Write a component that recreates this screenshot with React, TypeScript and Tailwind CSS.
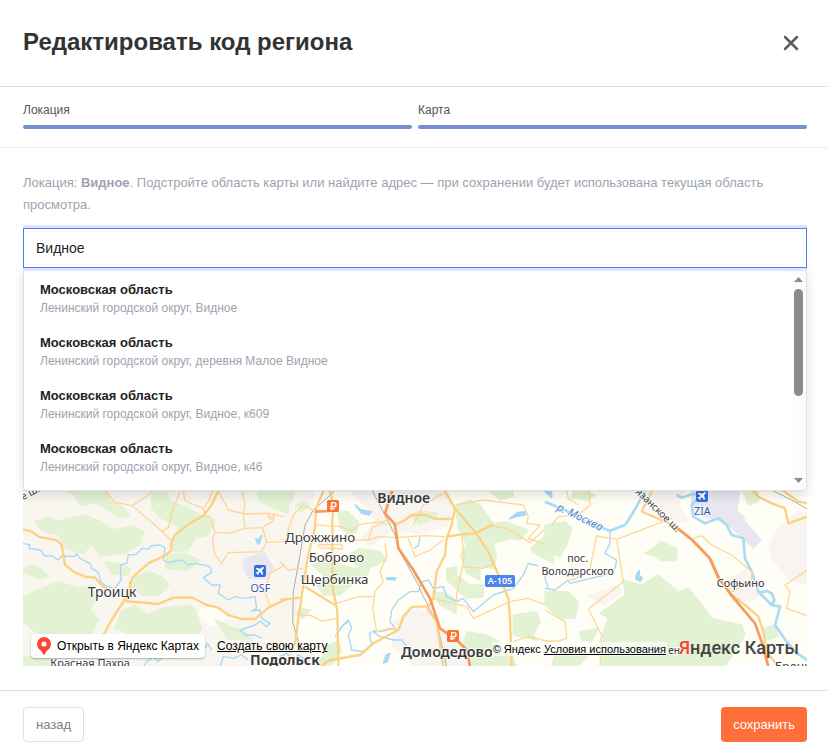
import { useState } from 'react';
import { X } from 'lucide-react';

interface MapTileData {
  x: number;
  land: string[];
  greens: string[];
  airports: string[];
  rivers: string[];
  wideRivers: string[];
  lakes: string[];
  rails: string[];
  minorRoads: string[];
  roads: string[];
  highways: string[];
}

interface MapLabelProps {
  x: number;
  y: number;
  size: number;
  children: string;
  weight?: number;
  color?: string;
  anchor?: 'start' | 'middle';
  transform?: string;
  italic?: boolean;
}

const steps = ['Локация', 'Карта'];

const suggestions = [
  { id: 1, title: 'Московская область', subtitle: 'Ленинский городской округ, Видное' },
  { id: 2, title: 'Московская область', subtitle: 'Ленинский городской округ, деревня Малое Видное' },
  { id: 3, title: 'Московская область', subtitle: 'Ленинский городской округ, Видное, к609' },
  { id: 4, title: 'Московская область', subtitle: 'Ленинский городской округ, Видное, к46' },
];

const tiles: MapTileData[] = [
  {
    x: -24,
    land: ['M550 385L570 368 620 372 630 400 590 425z'],
    greens: [
      'M112 0L262 0 285 50 322 66 346 92 318 98 262 66 240 52 196 62 178 30z',
      'M60 110L100 96 130 108 210 90 255 108 296 135 350 122 385 140 376 178 330 205 255 212 230 178 205 205 150 190 130 150 84 140z',
      'M24 250L60 240 90 262 100 275 80 282 24 262z',
      'M24 335L70 315 130 290 190 310 230 300 240 340 225 375 250 405 215 470 140 520 120 500 60 440 24 410z',
      'M318 380L360 360 395 390 440 370 520 360 540 372 560 430 530 470 480 462 420 460 380 470 330 440 300 430z',
      'M360 278L400 258 440 275 462 300 430 330 380 330 356 305z',
      'M268 232L310 235 345 250 340 270 290 268z',
      'M410 25L440 0 470 50 520 70 560 90 600 105 580 150 540 160 520 195 480 200 470 170 490 125 440 100 410 70z',
      'M724 0L820 0 820 85 760 62 730 45z',
      'M455 210L510 205 555 225 520 255 450 250z',
      'M600 405L650 425 690 440 710 462 640 462z',
      'M24 515L104 515 114 545 24 545z',
    ],
    airports: ['M690 220L748 203 776 250 755 282 700 280 684 245z'],
    rivers: [
      'M24 175L45 180 42 190 75 195 90 213 110 212 130 225 140 213 180 215 183 205 195 220 225 235 230 250 250 262 258 290 275 305 300 310 318 285 316 240 335 235 340 210 365 208 380 190 400 192 410 182 435 180 450 188 445 225 460 233 500 225 520 240 545 235 585 245 590 262 565 278 590 300 615 300 610 325 640 345 660 335 690 340 720 335 725 370 710 378 735 375 740 400 765 415 755 425 735 408 720 420 675 435 690 450 720 450 740 460',
      'M615 545L625 515 655 520 680 510 700 525',
      'M385 545L395 530 415 515 430 530 445 510 470 520',
      'M565 500L578 475 590 495',
    ],
    wideRivers: [],
    lakes: ['M722 160L730 165 741 150 735 172 728 177z'],
    rails: [],
    minorRoads: [
      'M256 0L300 52 352 62 400 30 420 0',
      'M352 62L440 138 468 165',
      'M440 140L460 128 475 70 502 0',
      'M502 0L510 48 565 70 580 50 600 0',
      'M565 70L568 92 585 95 600 140 592 165 600 210 620 235 640 203 740 200 755 170 742 128 690 130 640 145 600 142',
      'M611 20L640 75 690 87 760 85 810 95',
      'M690 130L685 85 690 55 676 0',
      'M745 125L775 108 778 85 770 100 758 85 765 105',
      'M742 128L755 172 810 170',
      'M810 240L765 265 750 320 765 365',
    ],
    roads: [
      'M24 133L50 140 70 155 125 166 140 180 150 240 180 262 210 275 240 278 265 305 285 320',
      'M618 0L590 60 565 92 520 118 480 150 468 175 470 195 450 212 400 235 352 278 340 325 325 350 290 405 265 450',
      'M345 290L348 320 335 345',
      'M328 348L430 357 475 338 530 337 575 360 610 368 640 390 680 402 720 402 760 368 810 345',
    ],
    highways: [],
  },
  {
    x: 771,
    land: [
      'M105 0L810 0 810 545 150 545 60 470 50 380 85 210 105 130z',
    ],
    greens: [
      'M0 0L45 0 35 50 0 62z',
      'M45 60L75 48 90 65 65 78z',
      'M172 80L205 80 235 110 230 140 205 150 180 125z',
      'M395 95L410 80 470 82 470 100 420 118z',
      'M525 60L570 45 600 60 640 115 680 110 745 135 720 165 690 160 640 175 650 215 640 250 600 245 600 285 560 265 540 210 560 180 535 130z',
      'M630 20L640 0 700 0 700 35 660 45z',
      'M205 210L240 190 300 200 320 225 280 245 230 240z',
      'M95 240L140 225 220 250 270 240 265 265 215 300 180 330 130 330 110 300 130 270z',
      'M500 250L530 245 530 270 570 300 610 300 610 335 560 340 500 285z',
      'M455 320L500 325 530 345 528 385 480 360z',
      'M700 390L770 380 780 410 760 450 770 465 700 450z',
      'M560 440L620 450 680 480 710 545 570 545 550 480z',
      'M145 480L175 470 185 500 150 545 110 545z',
      'M60 370L90 375 70 400 45 385z',
      'M755 185L800 150 820 160 820 235 755 200z',
    ],
    airports: [],
    rivers: [
      'M425 290L445 285 460 310 490 305 500 335 530 350 550 340 580 380 640 330 700 310 730 270 745 235 775 243',
      'M425 290L415 320 390 320 355 345 335 375 330 410 345 430 300 440 280 440 300 455 340 465 365 465 385 490 405 500',
      'M180 430L205 405 215 430 205 450 215 495 250 500 275 480 268 445 285 435',
      'M402 190L415 182 420 155',
      'M800 245L795 280 805 310',
      'M0 515L20 505 40 525 55 510 85 530',
      'M205 410L190 420 165 455',
    ],
    wideRivers: [],
    lakes: [
      'M225 60L245 75 275 80 268 90 245 85z',
      'M688 102L712 82 738 80 735 90 710 95z',
      'M775 0L815 22 815 38z',
      'M320 278L348 278 345 285 320 283z',
      'M310 535L318 510 330 505 322 530z',
    ],
    rails: [
      'M170 0L160 22 100 75 75 120 60 210 40 320 38 410 55 470 60 500',
      'M268 0L320 100 345 150 360 200 415 300 430 335 470 410 500 545',
    ],
    minorRoads: [
      'M110 120L180 125 215 138 240 118 300 110 320 120',
      'M110 180L185 178 188 192 115 188',
      'M210 165L265 165 300 155 350 158 430 152 495 155',
      'M265 165L275 130 330 100',
      'M315 175L320 215 300 260 310 290 285 320 278 370 290 440 330 430 355 435',
      'M170 355L235 335 280 335',
      'M60 390L95 392 125 408 170 400',
      'M385 160L405 215 450 195 490 165',
      'M545 150L552 220 530 330 530 350',
      'M530 60L610 45 730 60 745 95 740 115 780 120 745 160 800 180',
      'M548 245L610 250 640 235',
      'M620 120L680 130 750 172 810 120',
      'M460 340L560 365 580 400 690 350 745 340 810 365',
      'M700 470L745 455 810 470',
      'M0 230L25 255 70 250',
      'M400 120L430 60 490 25',
      'M105 80L70 60 40 90 20 150',
    ],
    roads: [
      'M138 0L108 70 105 130 85 210 70 300 55 400 45 480',
      'M484 0L525 70 585 140 625 200 660 280 685 340 690 400 695 545',
      'M350 118L375 105 395 90 440 90 465 102 515 102',
      'M525 70L515 120 500 160 495 210 470 260 460 340 445 365 395 365 370 395 355 435 280 475 240 510 150 525 120 545',
      'M500 155L545 148 585 145 640 118',
      'M0 345L60 338',
      'M75 305L165 360',
      'M440 370L470 410 490 545',
      'M145 0L160 60 157 100 157 300 172 380 175 545',
    ],
    highways: [
      'M342 0L315 85 345 118 355 190 400 255 450 340 480 430 530 465 560 495 570 545',
      'M105 80L150 78',
    ],
  },
  {
    x: 1566,
    land: ['M15 0L820 0 820 545 15 545z'],
    greens: [
      'M0 120L60 110 80 130 65 180 45 215 0 200z',
      'M300 205L350 170 395 190 395 225 350 228 330 215z',
      'M165 385L240 330 235 285 290 300 340 270 400 320 430 310 480 370 500 400 590 420 600 450 540 545 170 545 165 470 190 400z',
      'M0 320L70 320 100 350 90 400 40 400 0 360z',
      'M105 440L160 430 140 470 110 465z',
      'M30 500L90 490 130 510 100 545 20 545z',
      'M585 0L640 0 640 50 610 60z',
      'M570 70L600 100 572 95z',
      'M90 0L150 30 130 45 80 40z',
      'M655 430L690 420 700 455 665 465z',
    ],
    airports: ['M440 0L588 0 575 80 648 165 625 190 540 110 475 95 440 60z'],
    rivers: [
      'M195 137L195 175 180 205 215 225 210 250 180 270 75 295 70 285 30 315 0 310',
    ],
    wideRivers: [
      'M0 50L60 75 120 110 195 137 240 120 260 90 300 20',
      'M395 30L410 38 440 28 470 25 440 60 445 95 480 115 520 100 545 120 560 150 595 160 600 220 620 260 640 320 680 360 705 365 690 420 725 470 750 500 800 535',
      'M640 325L665 318 680 325 688 345 680 360',
    ],
    lakes: ['M274 268L283 256 283 270 292 280 285 290 272 282z'],
    rails: ['M680 15L740 45 810 85'],
    minorRoads: [
      'M215 163L380 100',
      'M215 163L155 153 135 250 95 280 75 285',
      'M215 163L235 290 130 372 170 450 165 545',
      'M445 160L470 152 500 180 560 210 620 260 620 290 560 320',
      'M0 375L60 410 65 460 40 468 0 470',
      'M20 120L40 95 100 90 135 60 130 0',
      'M810 240L720 300 735 320 725 370 810 400',
      'M60 0L70 40 100 60',
    ],
    roads: [
      'M330 0L290 80 385 120 440 165 490 215 520 280 560 330 600 360 640 395 655 440 665 500 700 545',
      'M610 0L640 35 680 55 720 70 730 115 786 95',
      'M690 0L760 50 820 60',
    ],
    highways: ['M388 122L442 165 495 220 522 280 555 325 600 380 630 415 650 470 670 545'],
  },
];

const urbanAreas = [
  'M980 0L1270 0 1290 60 1270 110 1190 130 1110 120 1040 170 1020 140 1060 90z',
  'M1110 400L1170 350 1220 370 1260 430 1330 450 1330 530 1180 530 1110 470z',
  'M2238 165L2266 115 2326 65 2376 75 2376 285 2306 275 2246 205z',
  'M2110 275L2166 240 2216 305 2186 335 2126 330z',
  'M1866 0L1986 0 1966 45 1996 95 1946 95z',
  'M1696 320L1786 285 1796 305 1746 345z',
];

function MapLabel({ x, y, size, children, weight = 400, color = '#3b3b3b', anchor = 'start', transform, italic }: MapLabelProps) {
  return (
    <text
      x={x}
      y={y}
      fontSize={size}
      fontWeight={weight}
      fill={color}
      stroke="#ffffff"
      strokeWidth={6}
      strokeOpacity={0.8}
      strokeLinejoin="round"
      paintOrder="stroke"
      textAnchor={anchor}
      transform={transform}
      fontStyle={italic ? 'italic' : undefined}
    >
      {children}
    </text>
  );
}

function Plane({ x, y }: { x: number; y: number }) {
  return (
    <g transform={`translate(${x} ${y})`}>
      <rect width="36" height="36" rx="6" fill="#2f6fe0" />
      <path
        d="M29 7c-2-2-5 0-7 2l-3 2-11-3-3 3 9 6-4 5-4-1-2 2 5 3 3 5 2-2-1-4 5-4 6 9 3-3-3-11 3-3c2-2 4-4 2-6z"
        fill="#fff"
      />
    </g>
  );
}

function RubleSign({ x, y }: { x: number; y: number }) {
  return (
    <g transform={`translate(${x} ${y})`}>
      <rect width="36" height="36" rx="5" fill="#fb7430" />
      <path d="M14 31V8h7a6 6 0 0 1 0 12H9M9 26h14" fill="none" stroke="#fff" strokeWidth="4" />
    </g>
  );
}

function Lines({ paths, color, width }: { paths: string[]; color: string; width: number }) {
  return (
    <g fill="none" stroke={color} strokeWidth={width} strokeLinejoin="round">
      {paths.map((d) => (
        <path key={d} d={d} />
      ))}
    </g>
  );
}

function Areas({ paths, color }: { paths: string[]; color: string }) {
  return (
    <g fill={color} stroke={color} strokeWidth={4} strokeLinejoin="round">
      {paths.map((d) => (
        <path key={d} d={d} />
      ))}
    </g>
  );
}

function RegionMap() {
  return (
    <svg
      viewBox="0 0 2352 1158"
      preserveAspectRatio="xMidYMax slice"
      className="absolute inset-0 w-full h-full"
      fontFamily="'Noto Sans', sans-serif"
      role="img"
      aria-label="Карта"
    >
      <rect width="2352" height="1158" fill="#f9f6f0" />
      <g transform="translate(0 630)">
        {tiles.map((tile) => (
          <g key={tile.x} transform={`translate(${tile.x} -15)`}>
            <Areas paths={tile.land} color="#fffef6" />
          </g>
        ))}
        <Areas paths={urbanAreas} color="#f8f4ef" />
        {tiles.map((tile) => (
          <g key={tile.x} transform={`translate(${tile.x} -15)`}>
            <Areas paths={tile.greens} color="#e2f2d3" />
            <Areas paths={tile.airports} color="#e8e7f1" />
            <Lines paths={tile.rivers} color="#a8d8f4" width={4} />
            <Lines paths={tile.wideRivers} color="#a8dbf5" width={8} />
            <Areas paths={tile.lakes} color="#a8d8f4" />
            <Lines paths={tile.rails} color="#adadad" width={3} />
            <Lines paths={tile.minorRoads} color="#fdd79a" width={4} />
            <Lines paths={tile.roads} color="#fdd184" width={7} />
            <Lines paths={tile.highways} color="#f79a5c" width={8} />
          </g>
        ))}

        <g transform="translate(-24 -15)">
          <MapLabel x={24} y={46} size={30} transform="rotate(-28 24 46)">е ш.</MapLabel>
          <MapLabel x={218} y={337} size={42}>Троицк</MapLabel>
          <MapLabel x={106} y={545} size={33}>Красная Пахра</MapLabel>
          <Plane x={717} y={240} />
          <MapLabel x={736} y={321} size={32} color="#2d57ae" anchor="middle">OSF</MapLabel>
        </g>

        <g transform="translate(771 -15)">
          <RubleSign x={141} y={45} />
          <MapLabel x={292} y={54} size={42} weight={600}>Видное</MapLabel>
          <MapLabel x={15} y={171} size={40}>Дрожжино</MapLabel>
          <MapLabel x={86} y={231} size={40}>Боброво</MapLabel>
          <MapLabel x={62} y={298} size={40}>Щербинка</MapLabel>
          <MapLabel x={-90} y={540} size={42} weight={700}>Подольск</MapLabel>
          <rect x="615" y="270" width="90" height="36" rx="5" fill="#4c86e8" />
          <text x="660" y="298" fontSize="27" fontWeight="600" fill="#fff" textAnchor="middle">А-105</text>
          <RubleSign x={501} y={435} />
          <MapLabel x={363} y={516} size={43} weight={600}>Домодедово</MapLabel>
        </g>

        <g transform="translate(1566 -15)">
          <MapLabel x={34} y={74} size={33} color="#4a86c8" italic transform="rotate(26 34 74)">р. Москва</MapLabel>
          <MapLabel x={270} y={22} size={30} transform="rotate(44 270 22)">язанское ш.</MapLabel>
          <Plane x={453} y={15} />
          <MapLabel x={472} y={90} size={32} color="#2d57ae" anchor="middle">ZIA</MapLabel>
          <MapLabel x={98} y={231} size={32} anchor="middle">пос.</MapLabel>
          <MapLabel x={98} y={269} size={32} anchor="middle">Володарского</MapLabel>
          <MapLabel x={515} y={305} size={33}>Софьино</MapLabel>
          <MapLabel x={370} y={508} size={30}>ен</MapLabel>
          <MapLabel x={690} y={558} size={36}>Бронницы</MapLabel>
        </g>
      </g>
    </svg>
  );
}

function MapControls() {
  return (
    <div className="absolute inset-x-2 bottom-2 flex items-center text-black">
      <a href="#open" className="flex items-center h-6 pl-1 pr-[6px] rounded bg-white text-xs shadow-[0_1px_2px_rgba(0,0,0,0.3)] whitespace-nowrap">
        <svg viewBox="0 0 18 18" className="w-[18px] h-[18px] mr-1" aria-hidden="true">
          <path d="M9 0a7 7 0 0 0-7 7c0 2 .8 3.700 2 5 1.600 1.500 3.500 2.800 4.200 5.300.2.900 1.400.9 1.600 0 .7-2.500 2.600-3.800 4.200-5.300a7 7 0 0 0 2-5 7 7 0 0 0-7-7z" fill="#ff4433" />
          <circle cx="9" cy="7" r="2.600" fill="#fff" />
        </svg>
        Открыть в Яндекс Картах
      </a>
      <a href="#create" className="ml-3 text-xs underline whitespace-nowrap">Создать свою карту</a>
      <div className="ml-auto mt-[6px] px-px bg-white/70 text-[11px] leading-[14px] whitespace-nowrap">
        © Яндекс{' '}
        <a href="#terms" className="underline">Условия использования</a>
      </div>
      <a href="#maps" className="ml-3 mt-1 font-['Roboto',sans-serif] font-medium text-lg leading-5 text-[#454545] whitespace-nowrap">
        <span className="text-[#fc3f3f]">Я</span>ндекс Карты
      </a>
    </div>
  );
}

function Scrollbar() {
  return (
    <div className="w-[15px] py-1 flex flex-col items-center bg-[#fcfcfc]" aria-hidden="true">
      <svg viewBox="0 0 9 5" className="mt-1 w-[9px] h-[5px]">
        <path d="M4.500 0L9 5H0z" fill="#8b8b8b" />
      </svg>
      <div className="mt-[7px] w-[9px] h-[107px] rounded-full bg-[#8b8b8b]" />
      <svg viewBox="0 0 9 5" className="mt-auto mb-[3px] w-[9px] h-[5px]">
        <path d="M0 0H9L4.500 5z" fill="#8b8b8b" />
      </svg>
    </div>
  );
}

export default function App() {
  const [query, setQuery] = useState('Видное');

  return (
    <div className="min-h-screen flex flex-col bg-white font-['Liberation_Sans',Arial,sans-serif]">
      <header className="flex items-center justify-between px-6 pl-[23px] h-[87px] border-b border-[#dedede]">
        <h1 className="pb-0.5 text-2xl font-bold text-[#333333]">Редактировать код региона</h1>
        <button type="button" aria-label="Закрыть" className="text-[#5c5c5c]">
          <X className="w-6 h-6" strokeWidth={2.5} />
        </button>
      </header>

      <div className="grid grid-cols-2 gap-[6px] pl-[23px] pr-5 pt-[15px] pb-[18px] border-b border-[#ebebeb]">
        {steps.map((step) => (
          <div key={step}>
            <div className="text-xs text-[#555555]">{step}</div>
            <div className="mt-[7px] h-1 rounded-full bg-[#7690cf]" />
          </div>
        ))}
      </div>

      <main className="flex-1 flex flex-col pl-[23px] pr-5 py-6">
        <p className="mb-3 text-[13px] leading-[22px] text-[#9ca3af]">
          Локация: <strong>Видное</strong>. Подстройте область карты или найдите адрес — при сохранении будет использована
          текущая область просмотра.
        </p>

        <div className="relative z-10">
          <input
            type="text"
            aria-label="Адрес"
            value={query}
            onChange={(e) => setQuery(e.target.value)}
            className="relative z-10 block w-full h-10 px-3 border border-[#4f7df0] bg-white text-sm text-[#1f1f1f] outline-none shadow-[0_-3px_0_#dce5fd,0_3px_0_#dce5fd]"
          />
          <div className="absolute top-full inset-x-0 flex h-[223px] border border-[#e0e0e0] rounded-b bg-white shadow-[0_4px_12px_rgba(0,0,0,0.12)] overflow-hidden">
            <ul className="flex-1 pt-[3px]">
              {suggestions.map((item) => (
                <li key={item.id}>
                  <button type="button" className="block w-full h-[53px] px-4 text-left leading-[18px]">
                    <span className="block text-[13px] font-bold text-[#222222]">{item.title}</span>
                    <span className="block text-xs leading-[18px] text-[#9ca3af]">{item.subtitle}</span>
                  </button>
                </li>
              ))}
            </ul>
            <Scrollbar />
          </div>
        </div>

        <div className="relative flex-1 mt-3 min-h-[320px] overflow-hidden">
          <RegionMap />
          <MapControls />
        </div>
      </main>

      <footer className="flex items-center justify-between pl-[23px] pr-5 pt-4 pb-[14px] border-t border-[#dedede]">
        <button type="button" className="h-[35px] px-3 border border-[#e0e0e0] rounded text-[13px] text-[#808080]">
          назад
        </button>
        <button type="button" className="h-[35px] px-3 rounded bg-[#ff6f3a] text-[13px] text-white">
          сохранить
        </button>
      </footer>
    </div>
  );
}
